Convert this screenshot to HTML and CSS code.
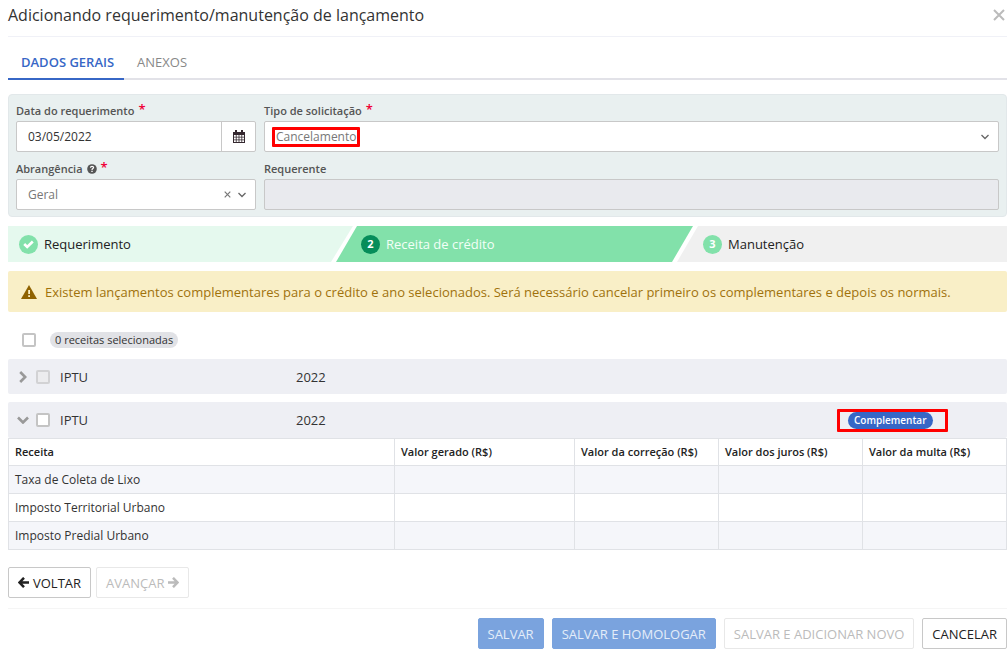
FILE: index.html
```html
<!DOCTYPE html>
<html lang="pt-BR">
<head>
<meta charset="utf-8">
<title>Adicionando requerimento/manutenção de lançamento</title>
<link rel="stylesheet" href="styles.css">
</head>
<body>
<main class="modal">
  <header class="modal-header">
    <h1>Adicionando requerimento/manutenção de lançamento</h1>
    <button class="close" type="button" aria-label="Fechar">
      <svg width="12" height="12" viewBox="0 0 12 12"><path d="M1 1l10 10M11 1L1 11" fill="none" stroke="currentColor" stroke-width="2"/></svg>
    </button>
  </header>

  <nav class="tabs">
    <a class="tab active" href="#dados">DADOS GERAIS</a>
    <a class="tab" href="#anexos">ANEXOS</a>
  </nav>

  <section class="panel" id="dados">
    <div class="field">
      <label for="data">Data do requerimento <span class="req">*</span></label>
      <div class="control">
        <input id="data" type="text" value="03/05/2022">
        <button class="addon" type="button" aria-label="Abrir calendário">
          <svg width="12" height="13" viewBox="0 0 12 13"><path d="M0 2h12v11H0z" fill="#34282f"/><path d="M2 0h2v3H2zM8 0h2v3H8z" fill="#34282f"/><path d="M1 5h1.800v1.800H1zM3.600 5h2v1.800h-2zM6.400 5h2v1.800h-2zM9.200 5H11v1.800H9.200zM1 7.600h1.800v1.800H1zM3.600 7.600h2v1.800h-2zM6.400 7.600h2v1.800h-2zM9.200 7.600H11v1.800H9.200zM1 10.200h1.800V12H1zM3.600 10.200h2V12h-2zM6.400 10.200h2V12h-2zM9.200 10.200H11V12H9.200z" fill="#fff"/></svg>
        </button>
      </div>
    </div>
    <div class="field">
      <label for="tipo">Tipo de solicitação <span class="req">*</span></label>
      <div class="control">
        <select id="tipo"><option>Cancelamento</option></select>
        <svg class="chevron" width="8" height="6" viewBox="0 0 8 6"><path d="M.5 1L4 4.500 7.500 1" fill="none" stroke="currentColor" stroke-width="1.300"/></svg>
        <span class="mark mark-tipo"></span>
      </div>
    </div>
    <div class="field">
      <label for="abr">Abrangência
        <svg class="help" width="10" height="10" viewBox="0 0 10 10"><circle cx="5" cy="5" r="4.800" fill="#555"/><path d="M3.400 3.700C3.500 2.700 4.200 2.300 5 2.300c1 0 1.600.5 1.600 1.300C6.600 4.600 5 4.600 5 5.900" fill="none" stroke="#fff" stroke-width="1.200"/><path d="M4.300 6.700h1.400V8H4.300z" fill="#fff"/></svg>
        <span class="req">*</span></label>
      <div class="control">
        <select id="abr"><option>Geral</option></select>
        <button class="clear" type="button" aria-label="Limpar">
          <svg width="7" height="7" viewBox="0 0 7 7"><path d="M.7.7l5.600 5.600M6.300.7L.7 6.300" fill="none" stroke="currentColor" stroke-width="1.200"/></svg>
        </button>
        <svg class="chevron" width="8" height="6" viewBox="0 0 8 6"><path d="M.5 1L4 4.500 7.500 1" fill="none" stroke="currentColor" stroke-width="1.300"/></svg>
      </div>
    </div>
    <div class="field">
      <label for="requerente">Requerente</label>
      <div class="control off"><input id="requerente" type="text" disabled></div>
    </div>
  </section>

  <ol class="steps">
    <li class="step done"><span class="dot"><svg width="11" height="9" viewBox="0 0 11 9"><path d="M1.200 4l3 3L9.800 1.500" fill="none" stroke="#fff" stroke-width="2.600"/></svg></span>Requerimento</li>
    <li class="step current"><span class="dot">2</span>Receita de crédito</li>
    <li class="step next"><span class="dot">3</span>Manutenção</li>
  </ol>

  <div class="alert" role="alert">
    <svg width="16" height="14" viewBox="0 0 16 14"><path d="M8 0l8 14H0z" fill="#8f6200"/><path d="M7.200 5h1.800v4H7.200zM7.200 10.200h1.800V12H7.200z" fill="#f9efc7"/></svg>
    <p>Existem lançamentos complementares para o crédito e ano selecionados. Será necessário cancelar primeiro os complementares e depois os normais.</p>
  </div>

  <div class="select-all">
    <input type="checkbox" id="todas">
    <label class="count" for="todas">0 receitas selecionadas</label>
  </div>

  <section class="group">
    <button class="toggle" type="button" aria-label="Expandir"><svg width="8" height="12" viewBox="0 0 8 12"><path d="M1.200 1l5 5-5 5" fill="none" stroke="currentColor" stroke-width="2.600"/></svg></button>
    <input type="checkbox" id="g1" disabled>
    <label for="g1">IPTU</label>
    <span>2022</span>
  </section>

  <section class="group open">
    <button class="toggle" type="button" aria-label="Recolher"><svg width="12" height="8" viewBox="0 0 12 8"><path d="M1 1.500l5 5 5-5" fill="none" stroke="currentColor" stroke-width="2.600"/></svg></button>
    <input type="checkbox" id="g2">
    <label for="g2">IPTU</label>
    <span>2022</span>
    <span class="tag">Complementar<span class="mark mark-tag"></span></span>
  </section>
  <table>
    <colgroup><col><col class="wide"><col class="val"><col class="val"><col class="val"></colgroup>
    <thead><tr><th>Receita</th><th>Valor gerado (R$)</th><th>Valor da correção (R$)</th><th>Valor dos juros (R$)</th><th>Valor da multa (R$)</th></tr></thead>
    <tbody>
      <tr><td>Taxa de Coleta de Lixo</td><td></td><td></td><td></td><td></td></tr>
      <tr><td>Imposto Territorial Urbano</td><td></td><td></td><td></td><td></td></tr>
      <tr><td>Imposto Predial Urbano</td><td></td><td></td><td></td><td></td></tr>
    </tbody>
  </table>

  <div class="wizard-nav">
    <button class="btn" type="button"><svg width="11" height="11" viewBox="0 0 11 11"><path d="M6 .8L1.500 5.500 6 10.200M2 5.500h9" fill="none" stroke="currentColor" stroke-width="2.500"/></svg>VOLTAR</button>
    <button class="btn" type="button" disabled>AVANÇAR<svg width="11" height="11" viewBox="0 0 11 11"><path d="M5 .8l4.500 4.700L5 10.200M9 5.500H0" fill="none" stroke="currentColor" stroke-width="2.500"/></svg></button>
  </div>

  <footer class="modal-footer">
    <button class="btn primary" type="button" disabled>SALVAR</button>
    <button class="btn primary" type="button" disabled>SALVAR E HOMOLOGAR</button>
    <button class="btn" type="button" disabled>SALVAR E ADICIONAR NOVO</button>
    <button class="btn" type="button">CANCELAR</button>
  </footer>
</main>
</body>
</html>
```
FILE: styles.css
```css
* { box-sizing: border-box; }

body {
  margin: 0;
  background: #fff;
  color: #333;
  font: 13px/18px "Open Sans", "Noto Sans", sans-serif;
}

button, input, select { font: inherit; color: inherit; margin: 0; }
button { cursor: pointer; }
svg { display: block; flex: none; }

.modal { padding: 0 1px 0 8px; }

.modal-header {
  display: flex;
  justify-content: space-between;
  align-items: center;
  height: 37px;
  padding-bottom: 6px;
  border-bottom: 1px solid #f0f1f7;
}
.modal-header h1 { margin: 0; font-size: 16px; line-height: 24px; font-weight: 400; }
.close { padding: 2px; border: 0; background: none; color: #bbb; }

.tabs {
  display: flex;
  margin-top: 8px;
  border-bottom: 2px solid #e2e2e8;
}
.tab {
  margin-bottom: -2px;
  padding: 8px 10px 7px 13px;
  border-bottom: 2px solid transparent;
  color: #888;
  text-decoration: none;
}
.tab.active { color: #3767c6; border-color: #3767c6; font-weight: 600; }

.panel {
  display: grid;
  grid-template-columns: 240px 1fr;
  gap: 9px 8px;
  margin-top: 14px;
  padding: 8px 7px 6px;
  border: 1px solid #e2e8ea;
  border-radius: 4px;
  background: #e9f0f0;
}
.field label {
  display: flex;
  align-items: center;
  gap: 4px;
  height: 18px;
  padding-bottom: 2px;
  color: #555;
  font-size: 11px;
  font-weight: 600;
}
.req { align-self: flex-start; line-height: 13px; font-size: 13px; color: #f00036; }
.control {
  position: relative;
  display: flex;
  height: 31px;
  border: 1px solid #c8c8c8;
  border-radius: 2px;
  background: #fff;
}
.control.off { background: #e9eaee; }
.control input, .control select {
  flex: 1;
  min-width: 0;
  padding: 0 11px;
  border: 0;
  background: none;
  appearance: none;
  font-size: 12px;
}
.control select { color: #777; opacity: 1; }
.addon {
  display: flex;
  align-items: center;
  justify-content: center;
  width: 34px;
  padding: 0;
  border: 0;
  border-left: 1px solid #c8c8c8;
  background: none;
}
.chevron { position: absolute; right: 9px; top: 12px; color: #666; pointer-events: none; }
.clear { position: absolute; right: 21px; top: 8px; padding: 3px; border: 0; background: none; color: #777; }

.mark { position: absolute; border: 3px solid #f00; border-radius: 1px; pointer-events: none; }
.mark-tipo { left: 7px; top: 5px; width: 88px; height: 20px; }
.mark-tag { left: -11px; right: -15px; top: -3px; bottom: -3px; }

.steps {
  display: grid;
  grid-template-columns: 328fr 341fr 330fr;
  margin: 9px 0;
  padding: 0;
  list-style: none;
}
.step {
  display: flex;
  align-items: center;
  gap: 6px;
  height: 36px;
  padding-left: 11px;
  color: #222;
}
.dot {
  display: flex;
  align-items: center;
  justify-content: center;
  width: 19px;
  height: 19px;
  border-radius: 50%;
  background: #82e1aa;
  color: #fff;
  font-size: 11px;
  font-weight: 700;
}
.done {
  margin-right: -19px;
  background: #e5f9ee;
  clip-path: polygon(0 0, calc(100% - 2px) 0, calc(100% - 24px) 100%, 0 100%);
}
.current {
  margin-right: -16px;
  padding-left: 25px;
  background: #82e1aa;
  color: #f2fff7;
  clip-path: polygon(21px 0, 100% 0, calc(100% - 21px) 100%, 0 100%);
}
.current .dot { background: #068d5a; }
.next {
  padding-left: 26px;
  background: #f0f0f0;
  clip-path: polygon(21px 0, 100% 0, 100% 100%, 0 100%);
}

.alert {
  display: flex;
  align-items: center;
  gap: 8px;
  min-height: 41px;
  padding: 4px 13px;
  border-radius: 2px;
  background: #f9efc7;
  color: #a0720c;
}
.alert p { margin: 0; }

input[type="checkbox"] {
  appearance: none;
  flex: none;
  width: 14px;
  height: 14px;
  border: 2px solid #c4c4c4;
  border-radius: 2px;
  background: #fff;
}
input[type="checkbox"]:disabled { background: #ececee; border-color: #d2d2d4; }

.select-all {
  display: flex;
  align-items: center;
  gap: 14px;
  padding: 20px 14px 11px;
}
.count {
  padding: 0 5px;
  border-radius: 8px;
  background: #e1e2e6;
  font-size: 11px;
  line-height: 16px;
}

.group {
  display: grid;
  grid-template-columns: 16px 14px 236px 1fr 159px;
  align-items: center;
  column-gap: 5px;
  height: 35px;
  padding-left: 7px;
  border-radius: 2px;
  background: #eeeff4;
}
.group label { padding-left: 5px; }
.group.open { height: 36px; margin-top: 8px; }
.toggle {
  display: flex;
  justify-content: center;
  padding: 0;
  border: 0;
  background: none;
  color: #999;
}
.tag {
  position: relative;
  justify-self: start;
  padding: 0 6px;
  border-radius: 9px;
  background: #3767c6;
  color: #fff;
  font-size: 10px;
  line-height: 17px;
  font-weight: 600;
}

table {
  width: 100%;
  table-layout: fixed;
  border-collapse: collapse;
  font-size: 12px;
}
col.wide { width: 180px; }
col.val { width: 144px; }
th, td {
  height: 28px;
  padding: 0 6px;
  border: 1px solid #e0e2e6;
  text-align: left;
}
th { height: 27px; font-size: 11px; font-weight: 600; color: #222; }
tbody tr:nth-child(odd) { background: #f5f6fa; }

.wizard-nav {
  display: flex;
  gap: 5px;
  padding: 17px 0 10px;
}
.modal-footer {
  display: flex;
  justify-content: flex-end;
  gap: 8px;
  padding: 9px 0 3px;
  border-top: 1px solid #f5f5f5;
}
.btn {
  display: flex;
  align-items: center;
  gap: 4px;
  height: 31px;
  padding: 0 9px;
  border: 1px solid #c8c8c8;
  border-radius: 2px;
  background: #fff;
  color: #222;
  white-space: nowrap;
}
.btn:disabled { color: #bbb; border-color: #e8e8e8; }
.btn.primary { background: #7aa3de; border-color: #7aa3de; color: #e4edf9; }
```
